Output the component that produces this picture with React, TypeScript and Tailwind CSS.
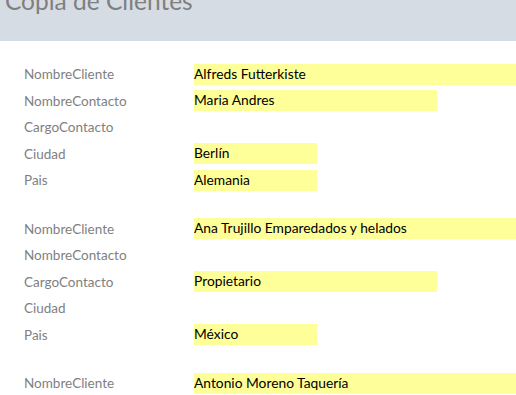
import React from 'react';

type Field = { label: string; value: string; width: string };

const records: Field[][] = [
  [
    { label: 'NombreCliente', value: 'Alfreds Futterkiste', width: 'w-[322px]' },
    { label: 'NombreContacto', value: 'Maria Andres', width: 'w-[243px]' },
    { label: 'CargoContacto', value: '', width: 'w-[243px]' },
    { label: 'Ciudad', value: 'Berlín', width: 'w-[123px]' },
    { label: 'Pais', value: 'Alemania', width: 'w-[123px]' },
  ],
  [
    { label: 'NombreCliente', value: 'Ana Trujillo Emparedados y helados', width: 'w-[322px]' },
    { label: 'NombreContacto', value: '', width: 'w-[243px]' },
    { label: 'CargoContacto', value: 'Propietario', width: 'w-[243px]' },
    { label: 'Ciudad', value: '', width: 'w-[123px]' },
    { label: 'Pais', value: 'México', width: 'w-[123px]' },
  ],
  [{ label: 'NombreCliente', value: 'Antonio Moreno Taquería', width: 'w-[322px]' }],
];

const App: React.FC = () => {
  return (
    <div className="w-[516px] h-[395px] overflow-hidden bg-white font-['Lato','Liberation_Sans',sans-serif]">
      <div className="h-[41px] bg-[#d6dce4] overflow-hidden">
        <h1 className="-mt-[13px] ml-[5px] text-[24.5px] leading-[28px] text-[#7f7f7f] whitespace-nowrap">
          Copia de Clientes
        </h1>
      </div>

      <div className="pt-[20px] flex flex-col gap-[22px]">
        {records.map((rec, i) => (
          <div key={i} className="flex flex-col">
            {rec.map((f, j) => (
              <div key={j} className="flex items-center h-[26.5px]">
                <span className="w-[194px] shrink-0 pl-[24px] text-[13.5px] text-[#7f7f7f] whitespace-nowrap">
                  {f.label}
                </span>
                {f.value ? (
                  <div className={`${f.width} h-[21px] bg-[#ffff99] flex items-center text-[13.8px] text-black whitespace-nowrap`}>
                    {f.value}
                  </div>
                ) : null}
              </div>
            ))}
          </div>
        ))}
      </div>
    </div>
  );
};

export default App;
